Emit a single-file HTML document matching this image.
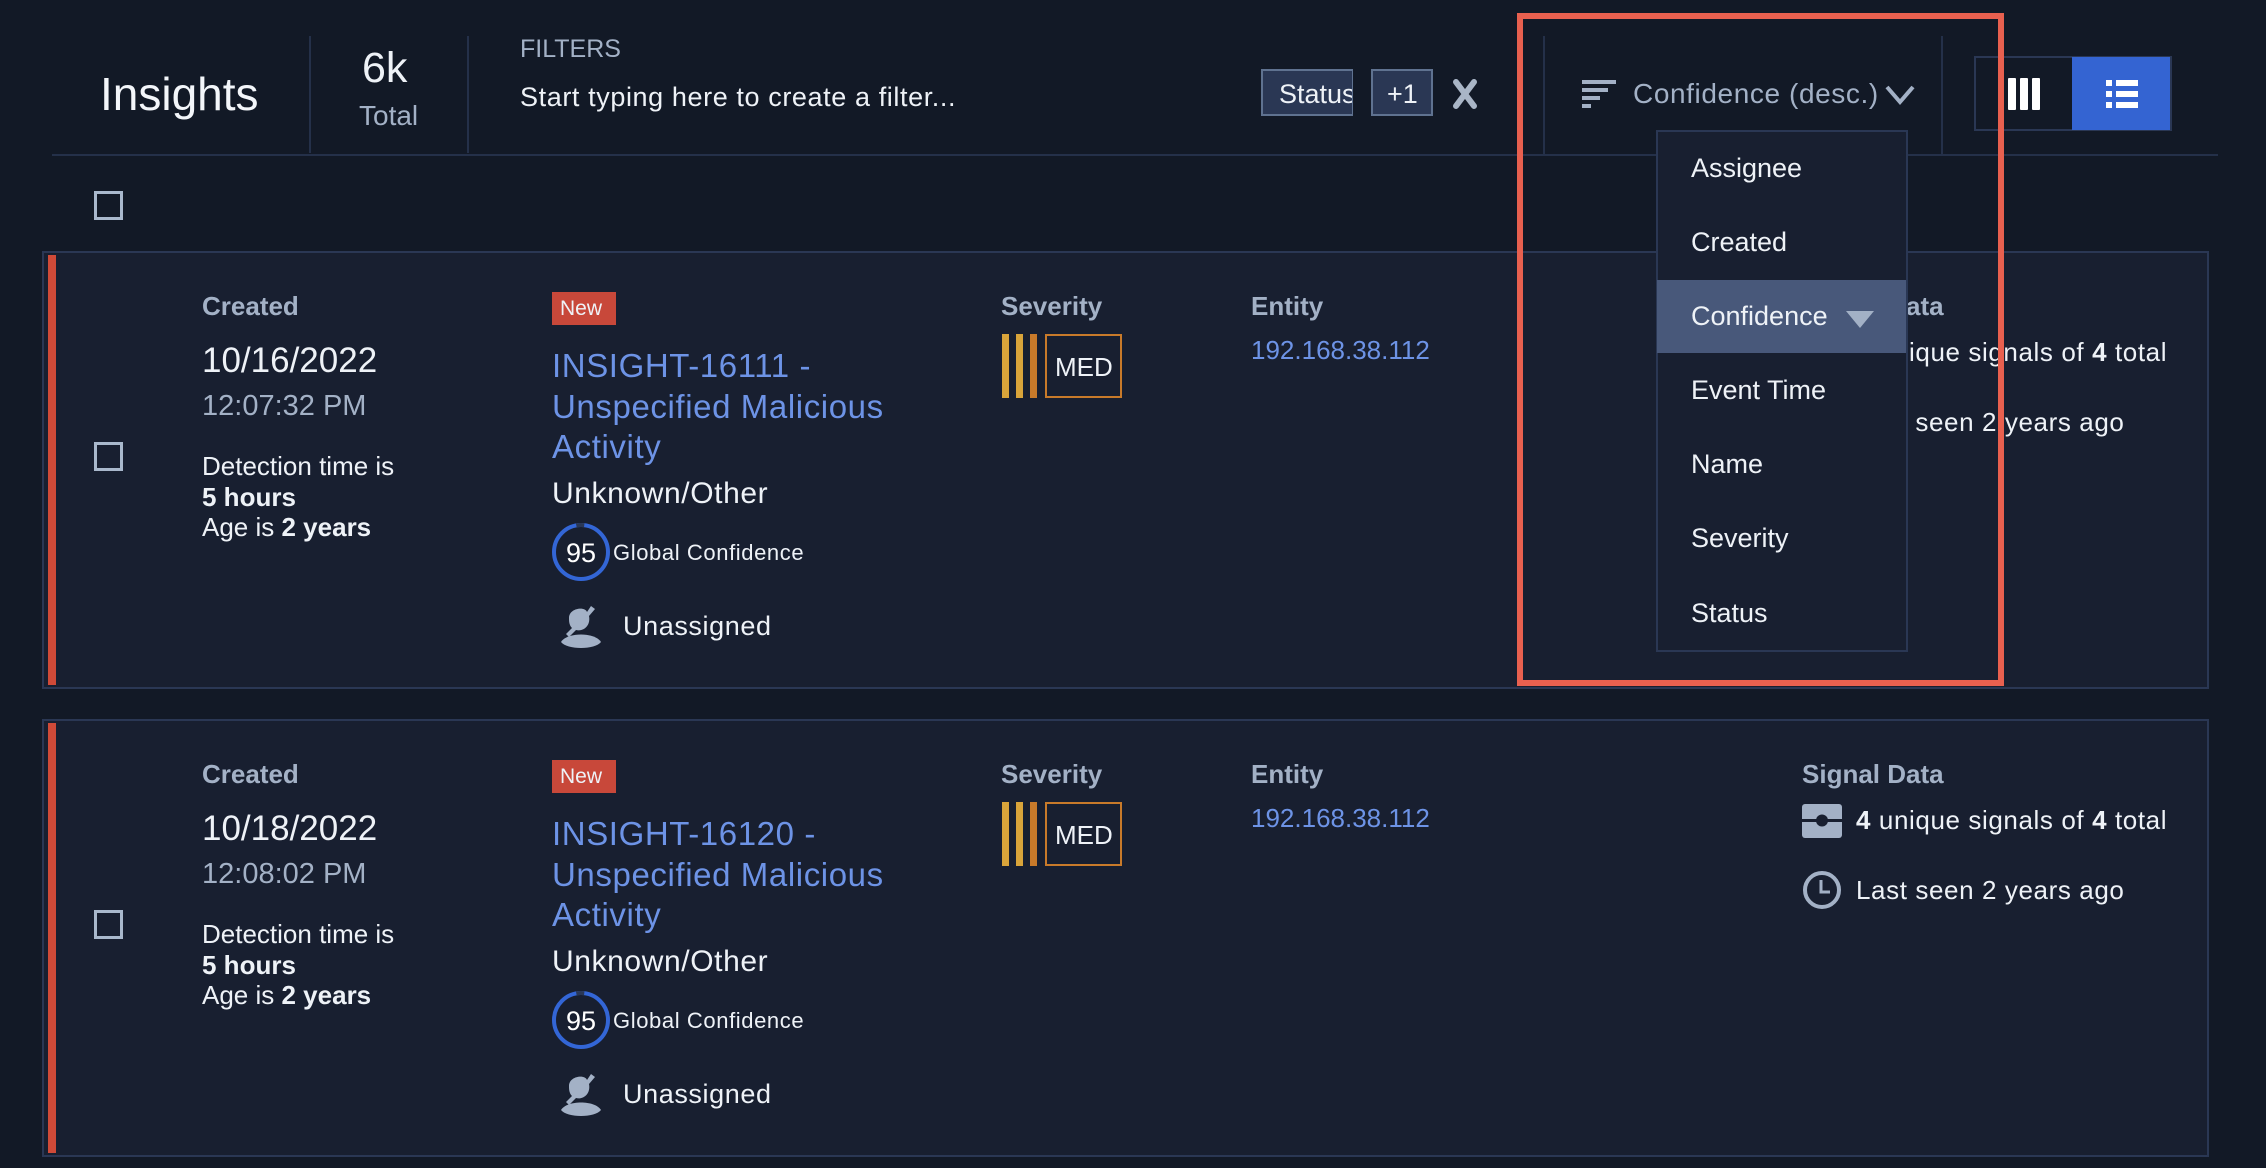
<!DOCTYPE html>
<html><head><meta charset="utf-8"><style>
*{margin:0;padding:0;box-sizing:border-box}
body{width:2266px;height:1166px;background:#121926;font-family:"Liberation Sans",sans-serif;color:#eef2f7;position:relative;overflow:hidden}
.a{position:absolute;white-space:nowrap;line-height:1}
.lbl{color:#a3b1c6;font-weight:bold;font-size:26px}
.card{position:absolute;left:42px;width:2167px;height:438px;background:#181f30;border:2px solid #2a3754}
.bar{position:absolute;left:4px;top:2px;width:8px;bottom:2px;background:#cf4a38}
.cb{position:absolute;width:29px;height:29px;border:3px solid #a9b8cc}
.link{color:#6d93e6}
.ls{letter-spacing:0.6px}
</style></head><body>
<div class="a" style="left:100px;top:71px;font-size:46px;color:#f3f6fa">Insights</div>
<div class="a" style="left:309px;top:36px;width:2px;height:117px;background:#243049"></div>
<div class="a" style="left:362px;top:47px;font-size:43px">6k</div>
<div class="a" style="left:359px;top:102px;font-size:28px;color:#a3b1c6">Total</div>
<div class="a" style="left:467px;top:36px;width:2px;height:117px;background:#243049"></div>
<div class="a" style="left:520px;top:37px;font-size:25px;color:#a3b1c6">FILTERS</div>
<div class="a ls" style="left:520px;top:84px;font-size:27px">Start typing here to create a filter...</div>
<div class="a" style="left:1261px;top:69px;width:93px;height:47px;background:#2a3754;border:2px solid #5f7290;overflow:hidden;font-size:27px;padding:10px 0 0 16px">Status</div>
<div class="a" style="left:1353px;top:69px;width:18px;height:50px;background:#121926"></div>
<div class="a" style="left:1371px;top:69px;width:62px;height:47px;background:#2a3754;border:2px solid #5f7290;font-size:27px;padding:10px 0 0 14px">+1</div>
<svg class="a" style="left:1452px;top:79px" width="26" height="30"><path d="M4 3 L22 27 M22 3 L4 27" stroke="#a9b5c6" stroke-width="6" stroke-linecap="round"/></svg>
<div class="a" style="left:52px;top:154px;width:2166px;height:2px;background:#243049"></div>
<div class="a" style="left:1543px;top:36px;width:2px;height:118px;background:#243049"></div>
<div class="a" style="left:1941px;top:36px;width:2px;height:118px;background:#243049"></div>
<svg class="a" style="left:1582px;top:80px" width="34" height="28"><g fill="#a3b1c6"><rect x="0" y="0" width="34" height="4"/><rect x="0" y="8" width="26" height="4"/><rect x="0" y="16" width="18" height="4"/><rect x="0" y="24" width="9" height="4"/></g></svg>
<div class="a ls" style="left:1633px;top:80px;font-size:28px;color:#a3b1c6">Confidence (desc.)</div>
<svg class="a" style="left:1884px;top:84px" width="32" height="22"><path d="M3 3 L16 18 L29 3" stroke="#a3b1c6" stroke-width="4" fill="none"/></svg>
<div class="a" style="left:1974px;top:56px;width:198px;height:75px;border:2px solid #2a3754"></div>
<div class="a" style="left:2072px;top:57px;width:98px;height:73px;background:#3464d2"></div>
<svg class="a" style="left:2008px;top:78px" width="34" height="32"><g fill="#fff"><rect x="0" y="0" width="8" height="32" rx="1"/><rect x="12" y="0" width="8" height="32" rx="1"/><rect x="24" y="0" width="8" height="32" rx="1"/></g></svg>
<svg class="a" style="left:2106px;top:80px" width="34" height="28"><g fill="#fff"><rect x="0" y="0" width="6" height="6"/><rect x="10" y="0" width="22" height="6"/><rect x="0" y="11" width="6" height="6"/><rect x="10" y="11" width="22" height="6"/><rect x="0" y="22" width="6" height="6"/><rect x="10" y="22" width="22" height="6"/></g></svg>
<div class="cb" style="left:94px;top:191px"></div>

<div class="card" style="top:251px"><div class="bar"></div></div>
<div class="card" style="top:719px"><div class="bar"></div></div>

<div>
<div class="cb" style="left:94px;top:442px"></div>
<div class="a lbl" style="left:202px;top:293px">Created</div>
<div class="a" style="left:202px;top:343px;font-size:35px">10/16/2022</div>
<div class="a" style="left:202px;top:392px;font-size:29px;color:#a3b1c6">12:07:32 PM</div>
<div class="a" style="left:202px;top:453px;font-size:26px">Detection time is</div>
<div class="a" style="left:202px;top:484px;font-size:26px;font-weight:bold">5 hours</div>
<div class="a" style="left:202px;top:514px;font-size:26px">Age is <b>2 years</b></div>
<div class="a" style="left:552px;top:292px;width:64px;height:33px;background:#c8483a;font-size:21px;padding:6px 0 0 8px">New</div>
<div class="a link ls" style="left:552px;top:346px;font-size:33px;line-height:40.5px;white-space:normal;width:380px">INSIGHT-16111 - Unspecified Malicious Activity</div>
<div class="a ls" style="left:552px;top:479px;font-size:30px">Unknown/Other</div>
<svg class="a" style="left:551px;top:522px" width="60" height="60"><circle cx="30" cy="30" r="27" stroke="#3366d6" stroke-width="4" fill="none"/><circle cx="30" cy="30" r="27" stroke="#2a3754" stroke-width="4" fill="none" stroke-dasharray="8 200" transform="rotate(-100 30 30)"/><text x="30" y="40" text-anchor="middle" font-size="27" fill="#fff" font-family="Liberation Sans">95</text></svg>
<div class="a ls" style="left:613px;top:542px;font-size:22px">Global Confidence</div>
<svg class="a" style="left:559px;top:604px" width="46" height="46"><g fill="#a3b1c6"><path d="M10 14 C10 4 26 2 28 8 L32 2 L36 5 L30 12 C32 22 24 28 17 26 L10 33 L7 30 L13 24 C10 21 10 17 10 14Z"/><path d="M2 38 C8 28 36 28 42 38 C36 46 8 46 2 38Z"/></g></svg>
<div class="a ls" style="left:623px;top:613px;font-size:27px">Unassigned</div>
<div class="a lbl" style="left:1001px;top:293px">Severity</div>
<div class="a" style="left:1002px;top:334px;width:7px;height:64px;background:#d9a43a"></div>
<div class="a" style="left:1016px;top:334px;width:7px;height:64px;background:#d9a43a"></div>
<div class="a" style="left:1030px;top:334px;width:7px;height:64px;background:#c87a2a"></div>
<div class="a" style="left:1045px;top:334px;width:77px;height:64px;border:2px solid #c87a2a;font-size:26px;padding:18px 0 0 8px">MED</div>
<div class="a lbl" style="left:1251px;top:293px">Entity</div>
<div class="a link" style="left:1251px;top:337px;font-size:26px">192.168.38.112</div>
<div class="a lbl" style="left:1802px;top:293px">Signal Data</div>
<svg class="a" style="left:1802px;top:336px" width="40" height="34"><rect x="0" y="0" width="40" height="34" rx="3" fill="#a3b1c6"/><rect x="0" y="15" width="40" height="3" fill="#181f30"/><circle cx="20" cy="16.5" r="6" fill="#181f30"/></svg>
<div class="a ls" style="left:1856px;top:339px;font-size:26px"><b>4</b> unique signals of <b>4</b> total</div>
<svg class="a" style="left:1802px;top:402px" width="40" height="40"><circle cx="20" cy="20" r="17" stroke="#a3b1c6" stroke-width="4" fill="none"/><path d="M19 10 V22 H28" stroke="#a3b1c6" stroke-width="3" fill="none"/></svg>
<div class="a ls" style="left:1856px;top:409px;font-size:26px">Last seen 2 years ago</div>
</div>
<div style="position:absolute;left:0;top:468px;width:2266px;height:700px">
<div class="cb" style="left:94px;top:442px"></div>
<div class="a lbl" style="left:202px;top:293px">Created</div>
<div class="a" style="left:202px;top:343px;font-size:35px">10/18/2022</div>
<div class="a" style="left:202px;top:392px;font-size:29px;color:#a3b1c6">12:08:02 PM</div>
<div class="a" style="left:202px;top:453px;font-size:26px">Detection time is</div>
<div class="a" style="left:202px;top:484px;font-size:26px;font-weight:bold">5 hours</div>
<div class="a" style="left:202px;top:514px;font-size:26px">Age is <b>2 years</b></div>
<div class="a" style="left:552px;top:292px;width:64px;height:33px;background:#c8483a;font-size:21px;padding:6px 0 0 8px">New</div>
<div class="a link ls" style="left:552px;top:346px;font-size:33px;line-height:40.5px;white-space:normal;width:380px">INSIGHT-16120 - Unspecified Malicious Activity</div>
<div class="a ls" style="left:552px;top:479px;font-size:30px">Unknown/Other</div>
<svg class="a" style="left:551px;top:522px" width="60" height="60"><circle cx="30" cy="30" r="27" stroke="#3366d6" stroke-width="4" fill="none"/><circle cx="30" cy="30" r="27" stroke="#2a3754" stroke-width="4" fill="none" stroke-dasharray="8 200" transform="rotate(-100 30 30)"/><text x="30" y="40" text-anchor="middle" font-size="27" fill="#fff" font-family="Liberation Sans">95</text></svg>
<div class="a ls" style="left:613px;top:542px;font-size:22px">Global Confidence</div>
<svg class="a" style="left:559px;top:604px" width="46" height="46"><g fill="#a3b1c6"><path d="M10 14 C10 4 26 2 28 8 L32 2 L36 5 L30 12 C32 22 24 28 17 26 L10 33 L7 30 L13 24 C10 21 10 17 10 14Z"/><path d="M2 38 C8 28 36 28 42 38 C36 46 8 46 2 38Z"/></g></svg>
<div class="a ls" style="left:623px;top:613px;font-size:27px">Unassigned</div>
<div class="a lbl" style="left:1001px;top:293px">Severity</div>
<div class="a" style="left:1002px;top:334px;width:7px;height:64px;background:#d9a43a"></div>
<div class="a" style="left:1016px;top:334px;width:7px;height:64px;background:#d9a43a"></div>
<div class="a" style="left:1030px;top:334px;width:7px;height:64px;background:#c87a2a"></div>
<div class="a" style="left:1045px;top:334px;width:77px;height:64px;border:2px solid #c87a2a;font-size:26px;padding:18px 0 0 8px">MED</div>
<div class="a lbl" style="left:1251px;top:293px">Entity</div>
<div class="a link" style="left:1251px;top:337px;font-size:26px">192.168.38.112</div>
<div class="a lbl" style="left:1802px;top:293px">Signal Data</div>
<svg class="a" style="left:1802px;top:336px" width="40" height="34"><rect x="0" y="0" width="40" height="34" rx="3" fill="#a3b1c6"/><rect x="0" y="15" width="40" height="3" fill="#181f30"/><circle cx="20" cy="16.5" r="6" fill="#181f30"/></svg>
<div class="a ls" style="left:1856px;top:339px;font-size:26px"><b>4</b> unique signals of <b>4</b> total</div>
<svg class="a" style="left:1802px;top:402px" width="40" height="40"><circle cx="20" cy="20" r="17" stroke="#a3b1c6" stroke-width="4" fill="none"/><path d="M19 10 V22 H28" stroke="#a3b1c6" stroke-width="3" fill="none"/></svg>
<div class="a ls" style="left:1856px;top:409px;font-size:26px">Last seen 2 years ago</div>
</div>

<div class="a" style="left:1656px;top:130px;width:252px;height:522px;background:#181f30;border:2px solid #2a3754"></div>
<div class="a" style="left:1657px;top:280px;width:249px;height:73px;background:#48587a"></div>
<div class="a" style="left:1691px;top:155px;font-size:27px">Assignee</div>
<div class="a" style="left:1691px;top:229px;font-size:27px">Created</div>
<div class="a" style="left:1691px;top:303px;font-size:27px">Confidence</div>
<svg class="a" style="left:1846px;top:311px" width="28" height="17"><path d="M0 0 H28 L14 17Z" fill="#a3b1c6"/></svg>
<div class="a" style="left:1691px;top:377px;font-size:27px">Event Time</div>
<div class="a" style="left:1691px;top:451px;font-size:27px">Name</div>
<div class="a" style="left:1691px;top:525px;font-size:27px">Severity</div>
<div class="a" style="left:1691px;top:600px;font-size:27px">Status</div>

<div class="a" style="left:1517px;top:13px;width:487px;height:673px;border:6px solid #e8604f"></div>
</body></html>
